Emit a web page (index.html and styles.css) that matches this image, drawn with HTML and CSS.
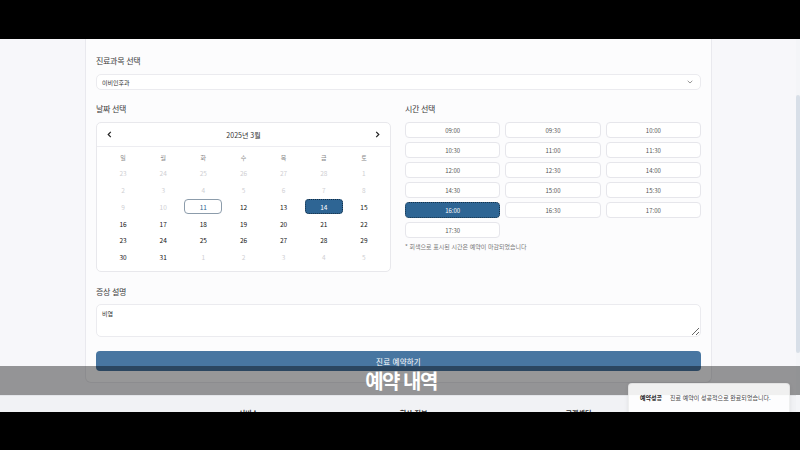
FILE: index.html
```html
<!DOCTYPE html>
<html lang="ko">
<head>
<meta charset="utf-8">
<title>진료 예약</title>
<link rel="stylesheet" href="styles.css">
</head>
<body>
<div class="frame">
  <div class="letterbox"></div>
  <div class="viewport">
    <div class="page">
      <main class="content">
        <section class="card">
          <div class="label">진료과목 선택</div>
          <div class="select">
            <span>이비인후과</span>
            <svg class="chev" width="6" height="4" viewBox="0 0 6 4"><path d="M0.7 0.8 L3 3 L5.3 0.8" fill="none" stroke="#8a8a8a" stroke-width="0.9"/></svg>
          </div>

          <div class="columns">
            <div class="col">
              <div class="label">날짜 선택</div>
              <div class="calendar">
                <div class="cal-head">
                  <svg width="5" height="7" viewBox="0 0 5 7"><path d="M3.8 0.8 L1.2 3.5 L3.8 6.2" fill="none" stroke="#222" stroke-width="1.2"/></svg>
                  <span class="cal-title">2025년 3월</span>
                  <svg width="5" height="7" viewBox="0 0 5 7"><path d="M1.2 0.8 L3.8 3.5 L1.2 6.2" fill="none" stroke="#222" stroke-width="1.2"/></svg>
                </div>
                <div class="cal-grid">
                  <span class="wd">일</span><span class="wd">월</span><span class="wd">화</span><span class="wd">수</span><span class="wd">목</span><span class="wd">금</span><span class="wd">토</span>
                  <span class="d off">23</span><span class="d off">24</span><span class="d off">25</span><span class="d off">26</span><span class="d off">27</span><span class="d off">28</span><span class="d off">1</span>
                  <span class="d off">2</span><span class="d off">3</span><span class="d off">4</span><span class="d off">5</span><span class="d off">6</span><span class="d off">7</span><span class="d off">8</span>
                  <span class="d off">9</span><span class="d off">10</span><span class="d today">11</span><span class="d">12</span><span class="d">13</span><span class="d sel">14</span><span class="d">15</span>
                  <span class="d">16</span><span class="d">17</span><span class="d">18</span><span class="d">19</span><span class="d">20</span><span class="d">21</span><span class="d">22</span>
                  <span class="d">23</span><span class="d">24</span><span class="d">25</span><span class="d">26</span><span class="d">27</span><span class="d">28</span><span class="d">29</span>
                  <span class="d">30</span><span class="d">31</span><span class="d off">1</span><span class="d off">2</span><span class="d off">3</span><span class="d off">4</span><span class="d off">5</span>
                </div>
              </div>
            </div>
            <div class="col">
              <div class="label">시간 선택</div>
              <div class="times">
                <span class="slot">09:00</span><span class="slot">09:30</span><span class="slot">10:00</span>
                <span class="slot">10:30</span><span class="slot">11:00</span><span class="slot">11:30</span>
                <span class="slot">12:00</span><span class="slot">12:30</span><span class="slot">14:00</span>
                <span class="slot">14:30</span><span class="slot">15:00</span><span class="slot">15:30</span>
                <span class="slot sel">16:00</span><span class="slot">16:30</span><span class="slot">17:00</span>
                <span class="slot">17:30</span>
              </div>
              <p class="note">* 회색으로 표시된 시간은 예약이 마감되었습니다</p>
            </div>
          </div>

          <div class="label label-sym">증상 설명</div>
          <textarea class="textarea">비염</textarea>
          <button class="submit">진료 예약하기</button>
        </section>
      </main>
      <footer class="footer">
        <div class="footer-inner">
          <span>서비스</span><span>회사 정보</span><span>고객센터</span>
        </div>
      </footer>
    </div>
    <div class="scrollbar"><div class="thumb"></div></div>
    <div class="caption">예약 내역</div>
    <div class="toast"><b>예약성공</b><span>진료 예약이 성공적으로 완료되었습니다.</span></div>
  </div>
  <div class="letterbox bottom"></div>
</div>
</body>
</html>
```
FILE: styles.css
```css
* { box-sizing: border-box; }
html, body { margin: 0; padding: 0; background: #000; }
body { font-family: "Noto Sans CJK KR", "Noto Sans", sans-serif; color: #222; }

.frame { width: 800px; height: 450px; display: flex; flex-direction: column; }
.letterbox { height: 39px; background: #000; flex: none; }
.letterbox.bottom { height: 38px; }

.viewport { position: relative; height: 373px; overflow: hidden; display: flex; background: #f7f7fa; flex: none; }
.page { width: 796px; display: flex; flex-direction: column; }
.scrollbar { width: 4px; background: #f4f5f8; padding-top: 56px; }
.thumb { height: 258px; background: #d8dfe8; border-radius: 2px; }

.content { padding-left: 85px; }
.card { width: 627px; background: #fcfcfd; border: 1px solid #e9e9ee; border-top: 0; border-radius: 0 0 6px 6px; padding: 16px 10px 11px 10px; }

.label { font-size: 8px; line-height: 12px; letter-spacing: -0.3px; color: #3a3a3a; margin-bottom: 7px; }

.select { height: 16px; background: #fff; border: 1px solid #ebebef; border-radius: 5px; display: flex; align-items: center; justify-content: space-between; padding: 0 7px 0 5px; font-size: 6px; color: #333; }
.chev { display: block; }

.columns { display: grid; grid-template-columns: 295px 296px; column-gap: 14px; margin-top: 13px; }

.calendar { margin-top: 1px; height: 150px; background: #fff; border: 1px solid #e8e8ec; border-radius: 5px; }
.cal-head { height: 24px; border-bottom: 1px solid #ededf1; display: flex; align-items: center; justify-content: space-between; padding: 0 10px 0 10px; }
.cal-head svg { display: block; }
.cal-title { font-size: 7px; color: #333; }
.cal-grid { display: grid; grid-template-columns: repeat(7, 1fr); grid-template-rows: 14px repeat(6, 15px); row-gap: 1.8px; padding: 3px 6px 0 6px; }
.wd { font-size: 6px; color: #888; display: flex; align-items: center; justify-content: center; }
.d { font-size: 6.5px; font-weight: 400; color: #111; display: flex; align-items: center; justify-content: center; margin: 0 1px; border-radius: 4px; border: 1px solid transparent; }
.d.off { color: #cfcfd3; }
.d.today { border-color: #8c9cab; color: #2e6390; }
.d.sel { background: #2e6594; color: #fff; outline: 1px dotted rgba(0,0,0,0.55); outline-offset: -1px; }

.times { display: grid; grid-template-columns: repeat(3, 1fr); grid-auto-rows: 16px; gap: 4px 5px; }
.slot { background: #fff; border: 1px solid #e6e6eb; border-radius: 4px; font-size: 6px; color: #555; display: flex; align-items: center; justify-content: center; }
.slot.sel { background: #2e6594; border-color: #2e6594; color: #fff; outline: 1px dotted rgba(0,0,0,0.5); outline-offset: -1px; }
.note { margin: 4px 0 0 0; font-size: 6px; line-height: 9px; color: #777; }

.label-sym { margin-top: 14px; margin-bottom: 6px; }
.textarea { display: block; width: 100%; height: 33px; resize: vertical; background: #fff; border: 1px solid #ebebef; border-radius: 5px; padding: 4px 5px; font-family: inherit; font-size: 6px; color: #333; margin: 0; }
.submit { display: block; width: 100%; height: 20px; margin-top: 14px; background: #4876a1; color: #fff; border: 0; border-radius: 4px; font-family: inherit; font-size: 7.5px; letter-spacing: 0.2px; padding: 0; }

.footer { margin-top: 12px; flex: 1; background: #f1f2f5; border-top: 1px solid #e4e6ea; padding-top: 12px; }
.footer-inner { margin-left: 166px; width: 495px; display: grid; grid-template-columns: repeat(3, 1fr); text-align: center; font-size: 7px; font-weight: 700; color: #333; }

.caption { position: absolute; left: 0; right: 0; top: 327px; height: 29px; background: rgba(0,0,0,0.4); color: #fff; font-size: 20px; font-weight: 700; letter-spacing: -1.5px; line-height: 29px; text-align: center; padding-left: 2px; }

.toast { position: absolute; left: 628px; top: 344px; width: 162px; height: 42px; background: rgba(255,255,255,0.86); border: 1px solid rgba(0,0,0,0.06); border-radius: 4px; box-shadow: 0 1px 4px rgba(0,0,0,0.08); padding: 10px 11px; display: flex; gap: 8px; font-size: 6px; line-height: 8px; color: #444; }
.toast b { color: #222; font-weight: 700; }
```
